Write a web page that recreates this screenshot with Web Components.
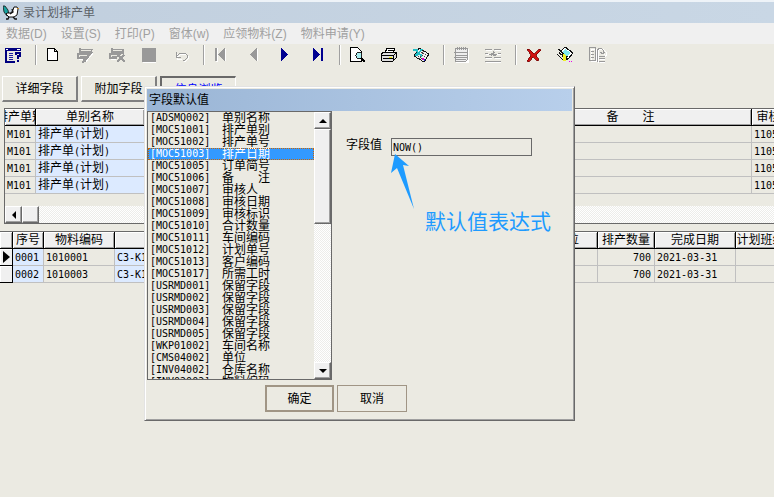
<!DOCTYPE html>
<html lang="zh-CN">
<head>
<meta charset="utf-8">
<title>录计划排产单</title>
<style>
html,body{margin:0;height:100%;overflow:hidden}
body{
  --face:#ebeae2;--light:#f0f0f0;--dark:#696969;--line:#c0c0c0;--cell:#dceaff;
  --mono:"DejaVu Sans Mono","Liberation Mono","Noto Sans CJK SC",monospace;
  background:var(--face);color:#000;
  font:12px/16px "Liberation Sans","Noto Sans CJK SC",sans-serif;
}
</style>
</head>
<body>
<app-window></app-window>

<script>
const define = (name, html, setup) => {
  const tpl = document.createElement('template');
  tpl.innerHTML = html;
  customElements.define(name, class extends HTMLElement {
    constructor() {
      super();
      this.attachShadow({mode: 'open'}).append(tpl.content.cloneNode(true));
    }
    connectedCallback() { if (setup && !this.ready) { this.ready = true; setup(this, this.shadowRoot); } }
  });
};

/* ---------- title bar ---------- */
define('title-bar', `
<style>
:host{display:flex;align-items:center;gap:4px;height:21px;padding:0 3px;border-top:2px solid #eef3f8;background:linear-gradient(90deg,#c1cfde,#c9d7e5);color:#5c6268}
h1{margin:0;font:inherit}
svg{display:block;width:16px;height:16px}
</style>
<svg viewBox="0 0 16 16" aria-hidden="true"><path d="M0 1h2l3 4 1 5-2 1-3-4z" fill="#16a3a0" stroke="#111" stroke-width=".8"/><path d="M4 8l4 0 2-3 1-3 3 0 1 2-1 6-3 2H6L3 9z" fill="#fff" stroke="#111"/><path d="M9 4l1 3-3 2M6 12l-1 2H3M10 12l2 2h2" fill="none" stroke="#111" stroke-width="1.3"/><path d="M14 3h2v1h-2z" fill="#c98a28"/></svg>
<h1><slot></slot></h1>`);

/* ---------- menu ---------- */
define('menu-bar', `
<style>
:host{display:flex;gap:14px;height:21px;padding:0 6px;align-items:center;background:var(--light)}
button{border:0;padding:0;background:none;font:inherit;color:#a0a0a0;white-space:nowrap}
</style>`, (el, root) => {
  el.getAttribute('items').split(',').forEach(t => {
    const b = document.createElement('button');
    b.disabled = true; b.textContent = t; root.append(b);
  });
});

/* ---------- toolbar ---------- */
const icons = {
  form: '<path d="M1.500 14V1.500H15" fill="none" stroke="#000080"/><path d="M0 1h16v3H0z" fill="#000080"/><path d="M1 2.500h2M12 2.500h3" stroke="#fff"/><path d="M1 4v11h9" fill="none" stroke="#000080" stroke-width="2"/><path d="M4 6.500h4M4 8.500h4M4 10.500h4M4 12.500h4" stroke="#2020a0"/><path d="M10.500 8V6h4v3h-2v3M12.500 13v2" fill="none" stroke="#000080" stroke-width="2"/>',
  doc: '<path d="M2.500 1.500h7l3 3v9h-10zM9.500 1.500v3h3" fill="#fff" stroke="#000"/>',
  edit: '<path d="M2 2.500h13M4 4.500h11M1 7.500h11M3 9.500h9" stroke="#999"/><path d="M3 1v5h11l1-4M1 6v5h7M15 5l-7 9-2 1 1-3z" fill="none" stroke="#999" stroke-width="1.500"/><path d="M2 12.500h4M9 14.500l7-8" stroke="#fff"/>',
  del: '<path d="M2 2.500h13M4 4.500h11M1 7.500h11M3 9.500h7" stroke="#999"/><path d="M3 1v5h11V2M1 6v5h7M9 8l7 7M15 8l-7 7" fill="none" stroke="#999" stroke-width="1.500"/><path d="M2 12.500h5" stroke="#fff"/>',
  block: '<path d="M2 2h13v14H2z" fill="#fff"/><path d="M1 1h14v14H1z" fill="#999"/>',
  undo: '<path d="M3 6v5h5M3 10l4-4h5l2 2v3l-2 2h-2" transform="translate(1 1)" fill="none" stroke="#fff"/><path d="M3 5v5h5M3 10l4-4h5l2 2v3l-2 2h-2" fill="none" stroke="#999"/>',
  first: '<path d="M3 1h2v14H3zM13 1v14L6 8z" fill="#fff"/><path d="M2 1h2v13H2zM12 1v13L5 7.500z" fill="#999"/>',
  prev: '<path d="M13 2v13L6 8z" fill="#fff"/><path d="M12 1v13L5 7.500z" fill="#999"/>',
  next: '<path d="M4 1v13l7-6.500z" fill="#000090"/>',
  last: '<path d="M4 1v13l7-6.500zM12 1h2v13h-2z" fill="#000090"/>',
  preview: '<path d="M1.500 .5h7l4 4v10h-11z" fill="#fff" stroke="#000"/><circle cx="10" cy="8.500" r="3" fill="#a8eef0" stroke="#222"/><path d="M12 11l4 4" stroke="#000" stroke-width="2"/>',
  print: '<path d="M4 6l2-5h8l-2 5" fill="#fff" stroke="#000"/><path d="M0 7l3-2h12v6l-3 3H1z" fill="#ddd" stroke="#000"/><path d="M7 3.500h5M1 8.500h11l3-2M2 11.500h10M12 8v6" fill="none" stroke="#000"/><path d="M8 10h3v1H8z" fill="#ee0"/>',
  tool: '<path d="M6 1l10 6-5 8L1 9z" fill="#eee" stroke="#111"/><path d="M7 4l6 4M6 6l6 4M5 9l5 3M11 4l-5 8" stroke="#444" stroke-dasharray="1 1"/><path d="M0 3h4l1 4 4-5M2 9l3-3 4 3" fill="none" stroke="#22bcc4" stroke-width="2"/><path d="M9 11h2v2H9z" fill="#d0b"/><path d="M11 12h1v2h-1z" fill="#22d"/>',
  note: '<path d="M3 2h13v14H3z" fill="#fff"/><path d="M2.500 1.500h12v11l-2 2h-10z" fill="#eee" stroke="#999"/><path d="M4 0v3M6 0v3M8 0v3M10 0v3M12 0v3M1 5.500h13M3 8.500h11M1 10.500h13M3 12.500h10" stroke="#999"/>',
  merge: '<path d="M1 3.500h6M10 3.500h6M1 7.500h15M1 11.500h6M10 11.500h6M1 15.500h15" stroke="#fff"/><path d="M0 2.500h7M9 2.500h7M0 6.500h3M13 6.500h3M0 10.500h7M9 10.500h7M0 14.500h16M4 7.500h8M8 4v5M6 6l5 3M10 5L6 9" stroke="#999"/>',
  cross: '<path d="M2 2l3 1 4 4 5-5 2 1-5 5 3 5-2 1-4-4-4 5-2-1 4-6z" fill="#d01010" stroke="#700" stroke-width=".8"/>',
  send: '<path d="M8 0l8 6-5 6-9-6z" fill="#fff" stroke="#111"/><path d="M8 2l6 4-4 3-5-3z" fill="#7ee8ee"/><path d="M1 2l5 4v4l5 3M0 7l6 6 5-4" fill="none" stroke="#111" stroke-width="1.300"/><path d="M6 7l3 1v6H6z" fill="#ee2"/><path d="M12 14h1v1h-1zM14 14h1v1h-1z" fill="#e0e"/>',
  copy: '<path d="M1 1.500h5v12H1zM8 15V3l2-2h3l3 3v4M13 5l3 3 1-4M10 8.500h6M10 11.500h5M10 14.500h5" transform="translate(1 1)" fill="none" stroke="#fff"/><path d="M.5 .5h6v13h-6zM2 4.500h3M2 7.500h3M2 10.500h3M8.500 15V3l2-2h2l2 3v3M11 5l3 2 2-2M10 9.500h6M10 11.500h6M10 14.500h6" fill="none" stroke="#999"/>'
};
define('tool-group', `
<style>
:host{display:flex;gap:16px;padding:2px 14px 2px 8px;border-right:1px solid #a0a0a0;box-shadow:1px 0 #fff;margin-right:1px}
:host([end]){border:0;box-shadow:none}
button{display:block;width:16px;height:16px;padding:0;border:0;background:none}
svg{display:block;width:16px;height:16px;overflow:visible;shape-rendering:crispEdges}
</style>`, (el, root) => {
  el.getAttribute('icons').split(' ').forEach(n => {
    const b = document.createElement('button');
    b.setAttribute('aria-label', n);
    b.innerHTML = '<svg viewBox="0 0 16 16">' + icons[n] + '</svg>';
    root.append(b);
  });
});
define('tool-bar', `
<style>:host{display:flex;height:20px;padding:1px 0 11px;margin-left:-3px}</style><slot></slot>`);

/* ---------- page tabs ---------- */
define('page-tab', `
<style>
button{display:block;width:76px;height:26px;padding:0;font:inherit;color:#000;background:var(--face);border:solid;border-width:1px 2px 2px 1px;border-color:#fff #808080 #808080 #fff}
:host([pressed]) button{color:#00f;border-width:2px 1px 1px 2px;border-color:#696969 #fff #fff #696969}
</style><button><slot></slot></button>`);

/* ---------- scroll bars ---------- */
define('scroll-bar', `
<style>
:host{display:flex;overflow:hidden;background:repeating-conic-gradient(#fff 0 25%,#ededea 0 50%) 0 0/2px 2px}
:host([vertical]){flex-direction:column}
button,i{box-sizing:border-box;flex:none;display:grid;place-items:center;width:17px;height:17px;padding:0;background:var(--light);border:1px solid;border-color:#fff #696969 #696969 #fff;box-shadow:inset -1px -1px #a0a0a0}
:host([vertical]) i{height:95px}
:host([vertical]) button:last-child{margin-top:auto}
:host(:not([vertical])) button:last-child{display:none}
svg{display:block;width:8px;height:8px}
</style>
<button aria-label="back"><svg viewBox="0 0 8 8"><path/></svg></button><i></i>
<button aria-label="forward"><svg viewBox="0 0 8 8"><path d="M0 2h8L4 6z"/></svg></button>`, (el, root) =>
  root.querySelector('path').setAttribute('d', el.hasAttribute('vertical') ? 'M0 6h8L4 2z' : 'M6 0v8L2 4z'));

/* ---------- data grids ---------- */
const mono = t => '<span class="m">' + t + '</span>';
const order = mono('M101'), kind = '排产单' + mono('(') + '计划' + mono(')');
const grids = {
  orders: {
    cols: [[31, '排产单别'], [109, '单别名称', 1], [365, ''], [242, '备　　注'], [46, '审核人']],
    rows: Array(4).fill([order, kind, '', '', mono('11050')])
  },
  items: {
    cols: [[13, ''], [31, '序号', 1], [71, '物料编码'], [113, '品号', 1], [309, ''], [61, '单位'], [57, '排产数量', 0, 1], [81, '完成日期'], [50, '计划班组']],
    rows: [['▶', '0001', '1010001', 'C3-K1', '', '', '700', '2021-03-31', ''], ['', '0002', '1010003', 'C3-K1', '', '', '700', '2021-03-31', '']]
      .map(r => r.map((t, i) => i && t ? mono(t) : t))
  }
};
define('data-grid', `
<style>
:host{display:block;overflow:hidden;border-top:1px solid var(--dark)}
:host([name=orders]){margin:6px 0 0 4px;border-left:1px solid var(--dark);border-bottom:1px solid var(--dark)}
:host([name=items]){margin-top:7px}
table{table-layout:fixed;border-collapse:separate;border-spacing:0}
th,td{box-sizing:border-box;height:17px;padding:0;overflow:hidden;white-space:nowrap;line-height:15px}
th{font-weight:400;background:var(--light);border-right:1px solid #000;border-bottom:1px solid #000;box-shadow:inset 1px 1px #fff,inset -1px -1px #a0a0a0}
th div{display:flex;justify-content:center;line-height:16px}
td{padding-left:2px;border-right:1px solid var(--line);border-bottom:1px solid var(--line)}
td.b{background:var(--cell)}
td.r{text-align:right;padding-right:3px}
td.h{padding:0;background:var(--light);border-color:#000;box-shadow:inset 1px 1px #fff;font-size:12px}
td.h svg{display:block;width:12px;height:14px}
.m{font:10px/15px var(--mono)}
scroll-bar{height:17px;margin-top:12px}
</style><table><colgroup></colgroup><thead></thead><tbody></tbody></table>`, (el, root) => {
  const name = el.getAttribute('name'), {cols, rows} = grids[name];
  root.querySelector('table').style.width = cols.reduce((s, c) => s + c[0], 0) + 'px';
  root.querySelector('colgroup').innerHTML = cols.map(c => `<col style="width:${c[0]}px">`).join('');
  root.querySelector('thead').innerHTML = '<tr>' + cols.map(c => `<th><div><span>${c[1]}</span></div></th>`).join('') + '</tr>';
  root.querySelector('tbody').innerHTML = rows.map(r => '<tr>' + r.map((t, i) => {
    const head = name === 'items' && i === 0;
    const body = head && t ? '<svg viewBox="0 0 12 14"><path d="M3 1v12l7-6z"/></svg>' : t;
    return `<td class="${head ? 'h' : ''} ${cols[i][2] ? 'b' : ''} ${cols[i][3] ? 'r' : ''}">${body}</td>`;
  }).join('') + '</tr>').join('');
  if (name === 'orders') root.append(document.createElement('scroll-bar'));
});

/* ---------- field list ---------- */
const fields = [['ADSMQ002','单别名称'],['MOC51001','排产单别'],['MOC51002','排产单号'],['MOC51003','排产日期'],['MOC51005','订单简号'],['MOC51006','备　　注'],['MOC51007','审核人'],['MOC51008','审核日期'],['MOC51009','审核标识'],['MOC51010','合计数量'],['MOC51011','车间编码'],['MOC51012','计划单号'],['MOC51013','客户编码'],['MOC51017','所需工时'],['USRMD001','保留字段'],['USRMD002','保留字段'],['USRMD003','保留字段'],['USRMD004','保留字段'],['USRMD005','保留字段'],['WKP01002','车间名称'],['CMS04002','单位'],['INV04002','仓库名称'],['INV02002','物料编码']];
define('field-list', `
<style>
:host{box-sizing:border-box;display:flex;flex:none;width:185px;height:269px;border:1px solid var(--dark)}
ul{flex:1;margin:0;padding:0;list-style:none;overflow:hidden}
li{display:flex;height:12px;line-height:12px;padding-left:2px;white-space:pre}
li span{width:72px;font:10px/12px var(--mono)}
li[aria-selected=true]{background:#3399ff;color:#fff;outline:1px dotted #cc6600;outline-offset:-1px}
scroll-bar{width:17px}
</style><ul role="listbox" aria-label="字段"></ul><scroll-bar vertical></scroll-bar>`, (el, root) => {
  root.querySelector('ul').innerHTML = fields.map(([c, n], i) =>
    `<li role="option" aria-selected="${i === 3}"><span>[${c}]</span>${n}</li>`).join('');
});

/* ---------- dialog ---------- */
define('field-dialog', `
<style>
:host{position:absolute;left:144px;top:86px;box-sizing:border-box;width:431px;background:var(--face);border:1px solid;border-color:#e3e3e3 #696969 #696969 #e3e3e3;box-shadow:inset 1px 1px #fff,inset -1px -1px #a0a0a0;padding:2px 2px 8px}
h2{margin:0;padding:1px 2px;height:20px;line-height:20px;font-size:12px;font-weight:400;background:linear-gradient(90deg,#9ab5d5,#b8cfeb)}
.main{display:flex;align-items:flex-start;gap:14px}
label{display:flex;align-items:flex-start;gap:9px;margin-top:27px;white-space:nowrap;line-height:14px}
input{box-sizing:border-box;width:141px;height:18px;padding:0 1px;border:1px solid var(--dark);border-radius:0;background:transparent;font:10px/16px var(--mono);color:#000;outline:0}
.foot{display:flex;gap:3px;margin-top:5px;padding-left:118px}
.foot button{width:70px;height:27px;padding:0;font:inherit;color:#000;background:var(--face);border:1px solid #a09585}
.foot button:first-child{width:69px;border-width:2px}
</style>
<h2>字段默认值</h2>
<div class="main"><field-list></field-list><label>字段值<input value="NOW()"></label></div>
<div class="foot"><button>确定</button><button>取消</button></div>`);

/* ---------- callout ---------- */
define('call-out', `
<style>
:host{position:absolute;left:391px;top:154px;display:flex;flex-direction:column;color:#1e9bff;pointer-events:none}
svg{display:block;width:24px;height:56px}
p{margin:0 0 0 34px;font-size:21px;line-height:24px;white-space:nowrap}
</style>
<svg viewBox="0 0 24 56" aria-hidden="true"><path d="M4 0l14 12-6-1 11 44L6 14l-6 5z" fill="#1e9bff"/></svg>
<p><slot></slot></p>`);

define('app-window', `
<style>
:host{display:block;position:relative;min-height:100vh;overflow:hidden}
nav{display:flex;gap:3px;padding-left:2px}
</style>
<title-bar>录计划排产单</title-bar>
<menu-bar items="数据(D),设置(S),打印(P),窗体(w),应领物料(Z),物料申请(Y)"></menu-bar>
<tool-bar>
  <tool-group icons="form"></tool-group>
  <tool-group icons="doc edit del block undo"></tool-group>
  <tool-group icons="first prev next last"></tool-group>
  <tool-group icons="preview print tool"></tool-group>
  <tool-group icons="note merge"></tool-group>
  <tool-group icons="cross send copy" end></tool-group>
</tool-bar>
<nav><page-tab>详细字段</page-tab><page-tab>附加字段</page-tab><page-tab pressed>信息浏览</page-tab></nav>
<data-grid name="orders"></data-grid>
<data-grid name="items"></data-grid>
<field-dialog></field-dialog>
<call-out>默认值表达式</call-out>`);
</script>
</body>
</html>
